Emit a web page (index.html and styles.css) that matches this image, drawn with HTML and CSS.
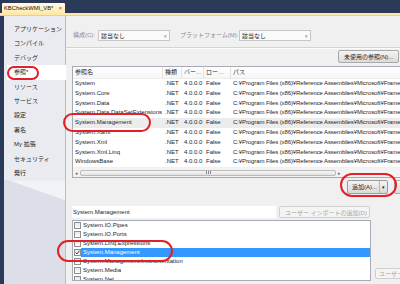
FILE: index.html
```html
<!DOCTYPE html>
<html lang="ja">
<head>
    <meta charset="UTF-8">
    <title>KBCheckWMI_VB - 参照</title>
    <link rel="stylesheet" href="styles.css">
</head>
<body>

<div class="titlebar">
    <div class="doc-tab"><span>KBCheckWMI_VB*</span><span class="tab-close">×</span></div>
</div>
<div class="tab-rule"></div>

<div class="designer">
    <nav class="sidebar">
        <div class="side-items">
            <div class="side-item">アプリケーション</div>
            <div class="side-item">コンパイル</div>
            <div class="side-item">デバッグ</div>
            <div class="side-item active">参照*</div>
            <div class="side-item">リソース</div>
            <div class="side-item">サービス</div>
            <div class="side-item">設定</div>
            <div class="side-item">署名</div>
            <div class="side-item">My 拡張</div>
            <div class="side-item">セキュリティ</div>
            <div class="side-item">発行</div>
        </div>
        <div class="side-tail"></div>
    </nav>

    <main class="page">
        <div class="config-bar">
            <span class="cfg-label first">構成(C):</span>
            <div class="combo"><span>該当なし</span><span class="combo-arrow">▾</span></div>
            <span class="cfg-label second">プラットフォーム(M):</span>
            <div class="combo"><span>該当なし</span><span class="combo-arrow">▾</span></div>
        </div>
        <div class="rule"></div>

        <div class="unused-row">
            <button class="btn">未使用の参照(N)...</button>
        </div>

        <div class="ref-list">
            <div class="ref-row ref-head">
                <span>参照名</span><span>種類</span><span>バー…</span><span>ロー…</span><span>パス</span>
            </div>
            <div class="ref-row"><span>System</span><span>.NET</span><span>4.0.0.0</span><span>False</span><span class="path">C:¥Program Files (x86)¥Reference Assemblies¥Microsoft¥Frame</span></div>
            <div class="ref-row"><span>System.Core</span><span>.NET</span><span>4.0.0.0</span><span>False</span><span class="path">C:¥Program Files (x86)¥Reference Assemblies¥Microsoft¥Frame</span></div>
            <div class="ref-row"><span>System.Data</span><span>.NET</span><span>4.0.0.0</span><span>False</span><span class="path">C:¥Program Files (x86)¥Reference Assemblies¥Microsoft¥Frame</span></div>
            <div class="ref-row"><span>System.Data.DataSetExtensions</span><span>.NET</span><span>4.0.0.0</span><span>False</span><span class="path">C:¥Program Files (x86)¥Reference Assemblies¥Microsoft¥Frame</span></div>
            <div class="ref-row picked"><span>System.Management</span><span>.NET</span><span>4.0.0.0</span><span>False</span><span class="path">C:¥Program Files (x86)¥Reference Assemblies¥Microsoft¥Frame</span></div>
            <div class="ref-row"><span>System.Xaml</span><span>.NET</span><span>4.0.0.0</span><span>False</span><span class="path">C:¥Program Files (x86)¥Reference Assemblies¥Microsoft¥Frame</span></div>
            <div class="ref-row"><span>System.Xml</span><span>.NET</span><span>4.0.0.0</span><span>False</span><span class="path">C:¥Program Files (x86)¥Reference Assemblies¥Microsoft¥Frame</span></div>
            <div class="ref-row"><span>System.Xml.Linq</span><span>.NET</span><span>4.0.0.0</span><span>False</span><span class="path">C:¥Program Files (x86)¥Reference Assemblies¥Microsoft¥Frame</span></div>
            <div class="ref-row"><span>WindowsBase</span><span>.NET</span><span>4.0.0.0</span><span>False</span><span class="path">C:¥Program Files (x86)¥Reference Assemblies¥Microsoft¥Frame</span></div>
            <div class="hscroll">
                <span class="scroll-arrow">◂</span>
                <div class="scroll-thumb"><span class="grip"></span></div>
                <span class="scroll-arrow">▸</span>
            </div>
        </div>

        <div class="add-row">
            <div class="split-btn"><span class="split-main">追加(A)...</span><span class="split-drop">▾</span></div>
            <button class="btn">参照(R)...</button>
        </div>

        <div class="import-row">
            <div class="textbox">System.Management</div>
            <button class="btn disabled wide">ユーザー インポートの追加(D)</button>
        </div>

        <div class="ns-area">
            <div class="ns-list">
                <div class="ns-item"><span class="check"></span><span class="ns-name">System.IO.Pipes</span></div>
                <div class="ns-item"><span class="check"></span><span class="ns-name">System.IO.Ports</span></div>
                <div class="ns-item"><span class="check"></span><span class="ns-name">System.Linq.Expressions</span></div>
                <div class="ns-item selected">
                    <span class="check">
                        <svg width="5" height="5" viewBox="0 0 5 5"><polyline points="0.6,2.6 1.9,4 4.4,0.8" fill="none" stroke="#2a2a2a" stroke-width="0.9"/></svg>
                    </span>
                    <span class="ns-name">System.Management</span>
                </div>
                <div class="ns-item"><span class="check"></span><span class="ns-name">System.Management.Instrumentation</span></div>
                <div class="ns-item"><span class="check"></span><span class="ns-name">System.Media</span></div>
                <div class="ns-item"><span class="check"></span><span class="ns-name">System.Net</span></div>
            </div>
            <button class="btn disabled short">ユーザー</button>
        </div>
    </main>
</div>

<!-- 赤丸の注釈 -->
<div class="mark mark-tab"></div>
<div class="mark mark-ref"></div>
<div class="mark mark-add"></div>
<div class="mark mark-ns"></div>

</body>
</html>
```

FILE: styles.css
```css
body {
    margin: 0;
    width: 400px;
    height: 284px;
    overflow: hidden;
    position: relative;
    background-color: #2b3a58;
    font-family: "Liberation Sans", "Noto Sans CJK JP", sans-serif;
    font-size: 6px;
    color: #1e1e1e;
}
.titlebar {
    height: 13px;
    display: flex;
    align-items: flex-end;
    padding-left: 2px;
}
.doc-tab {
    width: 63px;
    height: 10px;
    box-sizing: border-box;
    display: flex;
    align-items: center;
    justify-content: space-between;
    padding: 0 3px 0 2px;
    background: linear-gradient(#fffbe8, #ffeaa8);
    border-radius: 1px 1px 0 0;
    font-size: 5.8px;
    color: #111;
    white-space: nowrap;
}
.tab-close {
    font-size: 6px;
    color: #555;
}
.tab-rule {
    height: 2px;
    background-color: #ffe8a6;
    border-bottom: 1px solid #c9d0dd;
}
.designer {
    display: flex;
    height: 268px;
    padding-left: 4px;
}
.sidebar {
    width: 61px;
    display: flex;
    flex-direction: column;
    background-color: #e9ebf0;
}
.side-items {
    padding-top: 6px;
}
.side-item {
    height: 14.4px;
    line-height: 14.4px;
    padding-left: 10px;
    white-space: nowrap;
}
.side-item.active {
    background-color: #fff;
    margin-left: 3px;
    margin-right: -1px;
    padding-left: 7px;
    position: relative;
    z-index: 1;
}
.side-tail {
    flex: 1;
    position: relative;
    background-color: #dcdfe7;
}
.side-tail::before {
    content: "";
    position: absolute;
    top: 0;
    left: 0;
    right: 0;
    height: 20px;
    background-color: #f2f3f6;
    clip-path: polygon(8% 0, 100% 0, 100% 100%);
}
.page {
    flex: 1;
    min-width: 0;
    background-color: #f0f0f0;
    border-left: 1px solid #b5bbc8;
    padding-left: 6px;
}
.config-bar {
    height: 31px;
    box-sizing: border-box;
    padding-top: 14px;
    display: flex;
    align-items: flex-start;
}
.cfg-label {
    height: 11px;
    line-height: 11px;
    color: #8c8c8c;
    white-space: nowrap;
}
.cfg-label.first {
    width: 25px;
    margin-left: 1px;
}
.cfg-label.second {
    width: 59px;
    margin-left: 10px;
}
.combo {
    width: 72px;
    height: 11px;
    box-sizing: border-box;
    border: 1px solid #c6c6c6;
    background-color: #fafafa;
    display: flex;
    align-items: center;
    justify-content: space-between;
    padding: 0 2px;
    flex-shrink: 0;
}
.combo-arrow {
    font-size: 5px;
    color: #999;
}
.rule {
    height: 1px;
    margin-left: -6px;
    background-color: #d3d3d3;
    border-bottom: 1px solid #fbfbfb;
}
.unused-row {
    height: 17px;
    box-sizing: border-box;
    padding-top: 1px;
    padding-left: 266px;
    display: flex;
}
.btn {
    height: 13px;
    box-sizing: border-box;
    padding: 0 5px;
    border: 1px solid #a9a9a9;
    border-radius: 2px;
    background: linear-gradient(#f4f4f4, #dcdcdc);
    font-family: inherit;
    font-size: 6px;
    color: #1e1e1e;
    white-space: nowrap;
    flex-shrink: 0;
}
.btn.disabled {
    color: #a5a5a5;
    border-color: #cfcfcf;
    background: #f4f4f4;
}
.ref-list {
    width: 350px;
    box-sizing: border-box;
    border: 1px solid #a6abb5;
    background-color: #fff;
    flex-shrink: 0;
}
.ref-row {
    display: grid;
    grid-template-columns: 90px 19px 22px 27px 1fr;
    height: 9.8px;
    line-height: 9.8px;
    white-space: nowrap;
}
.ref-row span {
    padding-left: 2px;
    overflow: hidden;
}
.ref-row .path {
    letter-spacing: -0.1px;
}
.ref-head {
    height: 11px;
    line-height: 11px;
    background: linear-gradient(#ffffff, #f6f6f6);
    border-bottom: 1px solid #ececec;
    color: #2a2a2a;
}
.ref-head span {
    border-right: 1px solid #e2e2e2;
}
.ref-row.picked {
    background-color: #ececec;
}
.hscroll {
    height: 9px;
    display: flex;
    align-items: center;
    background-color: #f3f3f3;
    border-top: 1px solid #f0f0f0;
}
.scroll-arrow {
    width: 7px;
    text-align: center;
    font-size: 5px;
    color: #666;
}
.scroll-thumb {
    width: 256px;
    height: 6px;
    box-sizing: border-box;
    border: 1px solid #b9b9b9;
    border-radius: 2px;
    background: linear-gradient(#f7f7f7, #e2e2e2);
    display: flex;
    justify-content: center;
    align-items: center;
}
.grip {
    width: 5px;
    height: 3px;
    background: repeating-linear-gradient(90deg, #8a8a8a 0 1px, transparent 1px 2px);
}
.add-row {
    height: 28px;
    box-sizing: border-box;
    padding-top: 2px;
    padding-left: 275px;
    display: flex;
    gap: 6px;
}
.split-btn {
    width: 41px;
    height: 14px;
    box-sizing: border-box;
    display: flex;
    border: 1px solid #9a9a9a;
    border-radius: 2px;
    background: linear-gradient(#f4f4f4, #d9d9d9);
    flex-shrink: 0;
}
.split-main {
    flex: 1;
    line-height: 12px;
    padding-left: 4px;
    white-space: nowrap;
}
.split-drop {
    width: 7px;
    border-left: 1px solid #b5b5b5;
    text-align: center;
    line-height: 12px;
    font-size: 5px;
}
.add-row .btn {
    height: 14px;
}
.import-row {
    display: flex;
    gap: 3px;
    height: 12px;
}
.textbox {
    width: 204px;
    height: 12px;
    line-height: 12px;
    box-sizing: border-box;
    padding-left: 1px;
    background-color: #fff;
    white-space: nowrap;
    flex-shrink: 0;
}
.btn.wide {
    width: 91px;
    height: 12px;
}
.ns-area {
    display: flex;
    gap: 4px;
    margin-top: 2px;
}
.ns-list {
    width: 299px;
    height: 61px;
    box-sizing: border-box;
    border: 1px solid #a6abb5;
    background-color: #fff;
    overflow: hidden;
    flex-shrink: 0;
}
.ns-item {
    height: 9px;
    display: flex;
    align-items: center;
}
.check {
    width: 5px;
    height: 5px;
    margin-left: 1px;
    border: 1px solid #8e8f8f;
    background: linear-gradient(#e9e9e9, #fbfbfb);
    display: flex;
    align-items: center;
    justify-content: center;
    flex-shrink: 0;
}
.check svg {
    display: block;
}
.ns-name {
    flex: 1;
    height: 9px;
    line-height: 9px;
    padding-left: 2px;
    white-space: nowrap;
}
.ns-item.selected .ns-name {
    background-color: #3399ff;
    color: #fff;
}
.btn.short {
    margin-top: 48px;
    height: 11px;
    width: 30px;
    padding: 0 3px;
    overflow: hidden;
    text-align: left;
}
.mark {
    position: absolute;
    box-sizing: border-box;
    border: 2px solid #e32028;
    z-index: 5;
}
.mark-tab {
    left: 7px;
    top: 66px;
    width: 32px;
    height: 14px;
    border-radius: 7px;
}
.mark-ref {
    left: 63px;
    top: 113px;
    width: 88px;
    height: 19px;
    border-radius: 10px;
}
.mark-add {
    left: 340px;
    top: 173px;
    width: 57px;
    height: 24px;
    border-radius: 12px;
}
.mark-ns {
    left: 57px;
    top: 240px;
    width: 116px;
    height: 22px;
    border-radius: 11px;
}
```
